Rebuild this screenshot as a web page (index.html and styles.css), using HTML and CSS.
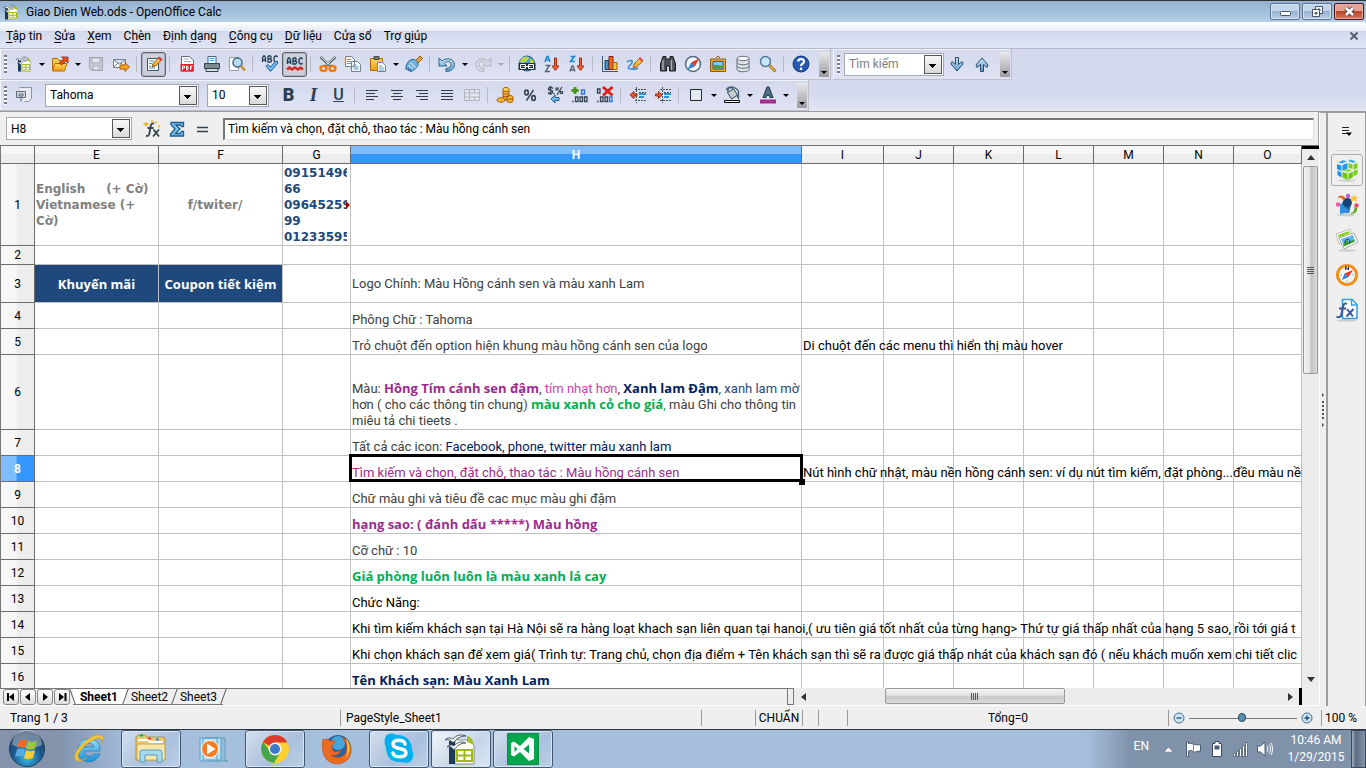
FILE: index.html
```html
<!DOCTYPE html>
<html lang="vi">
<head>
<meta charset="utf-8">
<title>Giao Dien Web.ods - OpenOffice Calc</title>
<link rel="stylesheet" href="styles.css">
</head>
<body>
<svg class="defs" aria-hidden="true">
  <defs>
    <linearGradient id="gold" x1="0" y1="0" x2="0" y2="1"><stop offset="0" stop-color="#ffd75a"/><stop offset="1" stop-color="#f09a1c"/></linearGradient>
    <linearGradient id="sky" x1="0" y1="0" x2="0" y2="1"><stop offset="0" stop-color="#cfe6f6"/><stop offset="1" stop-color="#5a9cc8"/></linearGradient>
    <radialGradient id="orb" cx=".5" cy=".75" r=".7"><stop offset="0" stop-color="#38c0ee"/><stop offset=".55" stop-color="#1b5c94"/><stop offset="1" stop-color="#24405f"/></radialGradient>
    <linearGradient id="ie" x1="0" y1="0" x2="0" y2="1"><stop offset="0" stop-color="#8fe0fb"/><stop offset="1" stop-color="#1b8fd8"/></linearGradient>
    <symbol id="calc" viewBox="0 0 32 32"><path d="M10 7h14l5 5v19H10z" fill="#fff" stroke="#888"/><path d="M4 8h6v23H4z" fill="#1c3a58"/><path d="M22 3c4 1 6 4 7 9l-7-3z" fill="#a4bd1c"/><path d="M12 17h15v11H12zM12 22.500h15M19.500 17v11" fill="#fff" stroke="#a0b81a" stroke-width="2"/><path d="M0 7c3-3 6-2 8-1 3-4 8-5 13-3-6 0-10 3-13 7-2-3-4-4-8-3zM2 14c3-3 5-2 7-1 3-4 8-5 12-3-6 0-9 3-12 7-2-3-4-4-7-3z" fill="#fff" stroke="#455664"/></symbol>
  </defs>
</svg>
<div class="app">
  <header class="titlebar">
    <svg class="i16" viewBox="0 0 32 32"><use href="#calc"/></svg>
    <h1>Giao Dien Web.ods - OpenOffice Calc</h1>
    <div class="winbtns">
      <button class="win" aria-label="Minimize"><svg viewBox="0 0 27 15"><rect x="8.500" y="7.500" width="10" height="4" rx="1" fill="#fff" stroke="#4a5468"/></svg></button>
      <button class="win" aria-label="Restore"><svg viewBox="0 0 27 15"><path d="M11.500 2.500h7v7h-7z" fill="#fff" stroke="#4a5468"/><path d="M14 5h2v2h-2z" fill="#8fb0d0" stroke="#4a5468"/><path d="M8.500 5.500h7v7h-7z" fill="#fff" stroke="#4a5468"/><path d="M11 8.500h2v1.500h-2z" fill="#8fb0d0" stroke="#4a5468"/></svg></button>
      <button class="win close" aria-label="Close"><svg viewBox="0 0 27 15"><path d="M10 4l7 7m0-7l-7 7" stroke="#4b4048" stroke-width="4.500"/><path d="M10 4l7 7m0-7l-7 7" stroke="#fff" stroke-width="2.600"/></svg></button>
    </div>
  </header>
  <nav class="menubar">
    <button><u>T</u>ập tin</button><button><u>S</u>ửa</button><button><u>X</u>em</button><button>C<u>h</u>èn</button><button>Định <u>d</u>ạng</button><button><u>C</u>ông cụ</button><button><u>D</u>ữ liệu</button><button>Cử<u>a</u> sổ</button><button>Trợ g<u>i</u>úp</button>
    <button class="docclose" aria-label="Đóng"><svg viewBox="0 0 10 10"><path d="M1.500 1.500l7 7m0-7l-7 7" stroke="#56606e" stroke-width="2"/></svg></button>
  </nav>
  <div class="toolbars">
    <div class="barrow">
      <div class="bar">
        <span class="grip"></span>
        <button class="t" aria-label="New"><svg class="small" viewBox="0 0 32 32"><use href="#calc"/></svg></button><button class="a" aria-label="More"></button>
        <button class="t" aria-label="Open"><svg viewBox="0 0 18 18"><path d="M1.500 15.500v-12h5l1.500 2h5v3" fill="#f7c948" stroke="#b4690e"/><path d="M1.500 16L4 8.500h12L13.500 16z" fill="url(#gold)" stroke="#b4690e"/><path d="M8 8l5-4-2.500-2H17v6l-2-2-4.500 4z" fill="#e2501c" stroke="#9b2408" stroke-width=".8"/></svg></button><button class="a" aria-label="More"></button>
        <button class="t" aria-label="Save"><svg viewBox="0 0 18 18"><path d="M2.500 2.500h13v13h-11l-2-2z" fill="#c6cbd8" stroke="#9da3b1"/><path d="M5 3h8v5H5zM6 11h6v4H6z" fill="#e5e8f0" stroke="#a8adba"/></svg></button>
        <button class="t" aria-label="Mail"><svg viewBox="0 0 18 18"><path d="M1.500 4.500h12v8h-12zM1.500 5l6 4 6-4M2 12l4-4m7 4L9 8" fill="#fff" stroke="#6f8293"/><path d="M8 10h5V7.500l4.500 4.500-4.500 4.500V14H8z" fill="#f6a31b" stroke="#a35c08"/></svg></button>
        <i class="s"></i>
        <button class="t on" aria-label="Edit"><svg viewBox="0 0 18 18"><path d="M2.500 3.500h11v12h-11z" fill="#fff" stroke="#38566e"/><path d="M4 6h5M4 8.500h3M4 11h2M4 13h6" stroke="#4d96c8"/><path d="M7 12l1-3.500L14.500 2 17 4.500 10.500 11z" fill="url(#gold)" stroke="#8a5a16"/><path d="M14 1.500l3 3-1.500 1.500-3-3z" fill="#d43838"/></svg></button>
        <i class="s"></i>
        <button class="t" aria-label="PDF"><svg viewBox="0 0 18 18"><path d="M3.500 1.500h8l4 4V16h-12z" fill="#fff" stroke="#62717e"/><path d="M6 4h5M6 6.500h7" stroke="#9db3c4"/><path d="M2.500 9h13v7.500h-13z" fill="#e21f26"/><path d="M4.500 15v-4h2v2h-2m4 2v-4h1l.5 1v2l-.5 1h-1m4 0v-4h2M12.500 13h1.500" fill="none" stroke="#fff"/></svg></button>
        <button class="t" aria-label="Print"><svg viewBox="0 0 18 18"><path d="M5 8V1.500h8V8" fill="#fff" stroke="#57636e"/><path d="M6.500 3.500h5M6.500 5.500h5" stroke="#54a0cf"/><path d="M1.500 8.500h15v5h-15z" fill="#7d8992" stroke="#33424e"/><path d="M3 13.500h12v3H3z" fill="#d8dde0" stroke="#33424e"/></svg></button>
        <button class="t" aria-label="Preview"><svg viewBox="0 0 18 18"><path d="M1.500 2.500h9v13h-9z" fill="#fff" stroke="#94a0ac"/><circle cx="9.500" cy="7.500" r="4.500" fill="#b7dcf2" stroke="#4b6b86" stroke-width="1.500"/><path d="M13 11l4 4.500" stroke="#c98e2e" stroke-width="2.500"/></svg></button>
        <i class="s"></i>
        <button class="t" aria-label="Spelling"><svg viewBox="0 0 18 18"><path d="M1.500 7V3l1-2h1l1 2v4M1.500 5h3M7 1v6h2.500l1-1V5L9.500 4H7h2.500l.5-1V2l-.5-1H7m9.500 1L15.500 1h-1L13 2.500v3L14.500 7h1l1-1" fill="none" stroke="#233f58" stroke-width="1.300"/><path d="M5 11l2-1.500L9.500 12 15 6l2 2-7.500 8.500z" fill="#6cb9ee" stroke="#215f9c"/></svg></button>
        <button class="t on" aria-label="AutoSpell"><svg viewBox="0 0 18 18"><path d="M1.500 9V5l1-2h1l1 2v4M1.500 7h3M7 3v6h2.500l1-1V7L9.500 6H7h2.500l.5-1V4l-.5-1H7m9.500 1L15.500 3h-1L13 4.500v3L14.500 9h1l1-1" fill="none" stroke="#233f58" stroke-width="1.400"/><path d="M1 14.500l2.500-2 2.500 2 3-2 3 2 2.500-2 2.500 2" fill="none" stroke="#d62a20" stroke-width="2.500"/></svg></button>
        <i class="s"></i>
        <button class="t" aria-label="Cut"><svg viewBox="0 0 18 18"><path d="M1.500 2l11 10M16.500 2l-11 10" stroke="#56616c" stroke-width="2.600"/><path d="M2 2l9 8M16 2l-9 8" stroke="#f4f4f4"/><ellipse cx="4.500" cy="13.500" rx="3" ry="2.500" fill="none" stroke="#ec7c14" stroke-width="2.400"/><ellipse cx="13.500" cy="13.500" rx="3" ry="2.500" fill="none" stroke="#ec7c14" stroke-width="2.400"/></svg></button>
        <button class="t" aria-label="Copy"><svg viewBox="0 0 18 18"><path d="M1.500 1.500h6l3 3v7h-9zM7.500 6.500h6l3 3v7h-9z" fill="#f5f8fa" stroke="#72828f"/><path d="M3 4.500h4M3 6.500h4M3 8.500h4M9.500 10h3M9.500 12h5M9.500 14h5" stroke="#5b9bc7"/></svg></button>
        <button class="t" aria-label="Paste"><svg viewBox="0 0 18 18"><path d="M1.500 3.500h12v12h-12z" fill="url(#gold)" stroke="#a9690f"/><path d="M5 1.500h5v3H5z" fill="#707a80" stroke="#42484c"/><path d="M8.500 7.500h5l3 3v6h-8z" fill="#fff" stroke="#72828f"/><path d="M10 11h3M10 13h5M10 15h5" stroke="#5b9bc7"/></svg></button><button class="a" aria-label="More"></button>
        <button class="t" aria-label="Format Paintbrush"><svg viewBox="0 0 18 18"><path d="M10 6l5-5 2.500 2.500-5 5z" fill="#e9a23b" stroke="#915e15"/><path d="M7 4.500c3-1 7 3 6 6-2 3-5 6-8 6l1-2-3 1 1-2-3 1V11c1-3 3-6 6-6.500z" fill="#74b4e0" stroke="#28639a"/><path d="M5 7.500l5.500 5M3.500 10l4 4" stroke="#e4f3fd"/></svg></button>
        <i class="s"></i>
        <button class="t" aria-label="Undo"><svg viewBox="0 0 18 18"><path d="M1 3v8h8L6.500 8.500C9 5.500 13 6 13 9.500c0 2.500-2 4-5 4V16.500c5 0 8.500-3 8.500-7C16.500 4 9 2 4 6z" fill="url(#sky)" stroke="#2c6288"/></svg></button><button class="a" aria-label="More"></button>
        <button class="t" aria-label="Redo"><svg viewBox="0 0 18 18"><path d="M17 3v8H9l2.500-2.500C9 5.500 5 6 5 9.500c0 2.500 2 4 5 4V16.500c-5 0-8.500-3-8.500-7C1.500 4 9 2 14 6z" fill="#d4d8e2" stroke="#aeb3c0"/></svg></button><button class="a off" aria-label="More"></button>
        <i class="s"></i>
        <button class="t" aria-label="Hyperlink"><svg viewBox="0 0 18 18"><circle cx="9" cy="8.500" r="7.500" fill="#4d9fd8" stroke="#245a7c"/><path d="M3 4c3-3 6-3 8-1L9 6 5 8 2 7zM12 4l3 1 1 3-4 1z" fill="#b8d84a"/><path d="M2 9.500h6v4H2zM10 9.500h6v4h-6zM5 11.500h8" fill="none" stroke="#24343c" stroke-width="3"/><path d="M2.500 9.500h5v4h-5zM10.500 9.500h5v4h-5zM5.500 11.500h7" fill="none" stroke="#fff"/></svg></button>
        <button class="t" aria-label="Sort A-Z"><svg viewBox="0 0 18 18"><path d="M2 7l2-5.500h1L7 7M3 5h3" fill="none" stroke="#1d8acb" stroke-width="1.600"/><path d="M2.500 10.500h4l-4 6H7" fill="none" stroke="#566573" stroke-width="1.400"/><path d="M11.500 3h2v8H16l-3.500 4.500L9 11h2.500z" fill="#f16a35" stroke="#a42a0d"/></svg></button>
        <button class="t" aria-label="Sort Z-A"><svg viewBox="0 0 18 18"><path d="M2 16.500L4 11h1l2 5.500M3 15h3" fill="none" stroke="#566573" stroke-width="1.400"/><path d="M2.500 1.500h4l-4 5H7" fill="none" stroke="#1d8acb" stroke-width="1.600"/><path d="M11.500 3h2v8H16l-3.500 4.500L9 11h2.500z" fill="#f16a35" stroke="#a42a0d"/></svg></button>
        <i class="s"></i>
        <button class="t" aria-label="Chart"><svg viewBox="0 0 18 18"><path d="M1.500 1v15.500H17" fill="none" stroke="#41566a"/><path d="M4 5.500h4v9H4z" fill="#3a95d2" stroke="#1a3c5c"/><path d="M8 1.500h4v13H8z" fill="#f5681c" stroke="#80240c"/><path d="M12 7.500h4v7h-4z" fill="#f9c33c" stroke="#9b660b"/></svg></button>
        <button class="t" aria-label="Draw"><svg viewBox="0 0 18 18"><path d="M1 7c4-3 7-1 4 2s-4 5 0 5 4 1 7-1" fill="none" stroke="#3389d4" stroke-width="1.600"/><path d="M7 13l1-4 6-6 3 3-6.500 6z" fill="url(#gold)" stroke="#99651a"/><path d="M14 2l3 3-1.500 1.500-3-3z" fill="#dc4640"/></svg></button>
        <i class="s"></i>
        <button class="t" aria-label="Find"><svg viewBox="0 0 18 18"><path d="M4 1.500h3V4h4V1.500h3L16.500 9v7h-6v-5h-3v5h-6V9z" fill="#4a5257" stroke="#161a1c"/><path d="M4 5v10M12.500 5v10" stroke="#a9b1b5" stroke-width="1.400"/></svg></button>
        <button class="t" aria-label="Navigator"><svg viewBox="0 0 18 18"><circle cx="9" cy="9" r="7.500" fill="#f4f8fb" stroke="#566b80" stroke-width="1.500"/><path d="M3.500 14.500l3.500-7 4 4z" fill="#2f87d4"/><path d="M15 3.500l-4 8-4-4z" fill="#e23a22"/></svg></button>
        <button class="t" aria-label="Gallery"><svg viewBox="0 0 18 18"><path d="M7 3l2-2 2 2" fill="none" stroke="#815314"/><path d="M1.500 4h15v12.500h-15z" fill="#eda52e" stroke="#8f5a0e"/><path d="M4 6.500h10V14H4z" fill="#84c8ee" stroke="#38526a"/><path d="M4.500 13.500v-3c4-2 5 1 9 0v3z" fill="#4b9e35"/></svg></button>
        <button class="t" aria-label="Data Sources"><svg viewBox="0 0 18 18"><path d="M3 3.500v11c0 3 12 3 12 0v-11" fill="#dfe3e6" stroke="#63717c"/><ellipse cx="9" cy="3.500" rx="6" ry="2.200" fill="#f5f7f8" stroke="#63717c"/><path d="M3 7.500c0 3 12 3 12 0M3 11c0 3 12 3 12 0" fill="none" stroke="#63717c"/></svg></button>
        <button class="t" aria-label="Zoom"><svg viewBox="0 0 18 18"><circle cx="6.500" cy="6.500" r="5" fill="#c5e6f7" stroke="#55789a" stroke-width="1.500"/><path d="M10.500 10.500l6 6" stroke="#8a6316" stroke-width="3"/><path d="M11 11l5 5" stroke="#f4c04a" stroke-width="1.400"/></svg></button>
        <i class="s"></i>
        <button class="t" aria-label="Help"><svg viewBox="0 0 18 18"><circle cx="9" cy="9" r="8" fill="#2458b4" stroke="#193c7a"/><path d="M6 6.500C6.500 3 12 3.500 12 6.500c0 2-3 2.300-3 4.500m0 1.500V15" fill="none" stroke="#fff" stroke-width="2.200"/></svg></button>
        <button class="more" aria-label="Toolbar options"></button>
      </div>
      <div class="bar">
        <span class="grip"></span>
        <span class="combo find"><select aria-label="Tìm kiếm"><option>Tìm kiếm</option></select></span>
        <button class="t" aria-label="Find next"><svg viewBox="0 0 18 18"><path d="M7.500 2.500h3v7l3.500-3 1 2.500-6 7-6-7 1-2.500 3.500 3z" fill="url(#sky)" stroke="#254b68"/></svg></button>
        <button class="t" aria-label="Find previous"><svg viewBox="0 0 18 18"><path d="M7.500 16.500h3v-7l3.500 3 1-2.500-6-7-6 7 1 2.500 3.500-3z" fill="url(#sky)" stroke="#254b68"/></svg></button>
        <button class="more" aria-label="Toolbar options"></button>
      </div>
    </div>
    <div class="barrow">
      <div class="bar">
        <span class="grip"></span>
        <button class="t" aria-label="Styles"><svg viewBox="0 0 18 18"><path d="M4.500 1.500h12v11l-3 3h-4" fill="#e9edf2" stroke="#8995a0"/><path d="M1.500 5.500h9v6h-9zM6 11.500v4M4 8h4v2H4z" fill="#d5dbe1" stroke="#5c6a76"/></svg></button>
        <span class="combo font"><select aria-label="Phông chữ"><option>Tahoma</option></select></span>
        <span class="combo size"><select aria-label="Cỡ chữ"><option>10</option></select></span>
        <button class="t fmt b">B</button><button class="t fmt it">I</button><button class="t fmt un">U</button>
        <i class="s"></i>
        <button class="t" aria-label="Left"><svg viewBox="0 0 18 18"><path d="M3 4.500h12M3 7.500h9M3 10.500h12M3 13.500h8" stroke="#303b44"/></svg></button>
        <button class="t" aria-label="Center"><svg viewBox="0 0 18 18"><path d="M3 4.500h12M5 7.500h8M3 10.500h12M5 13.500h8" stroke="#303b44"/></svg></button>
        <button class="t" aria-label="Right"><svg viewBox="0 0 18 18"><path d="M3 4.500h12M6 7.500h9M3 10.500h12M7 13.500h8" stroke="#303b44"/></svg></button>
        <button class="t" aria-label="Justify"><svg viewBox="0 0 18 18"><path d="M3 4.500h12M3 7.500h12M3 10.500h12M3 13.500h12" stroke="#303b44"/></svg></button>
        <button class="t" aria-label="Merge"><svg viewBox="0 0 18 18"><path d="M1.500 3.500h15v11h-15zM1.500 7h15M1.500 11h15M6.500 3.500v11M11.500 3.500V7m0 4v3.500" fill="#e3e6ef" stroke="#b2b6c2"/></svg></button>
        <i class="s"></i>
        <button class="t" aria-label="Currency"><svg viewBox="0 0 18 18"><path d="M7 3c0-2 6-2 6 0v11H7z" fill="url(#gold)" stroke="#a3600c"/><path d="M7 5.500h6M7 8h6M7 10.500h6M11 11c0-2 6-2 6 0v4c0 2-6 2-6 0zM11 13h6M1 14c0-3 8-3 8 0s-8 3-8 0z" fill="#f6b335" stroke="#a3600c"/></svg></button>
        <button class="t" aria-label="Percent"><svg viewBox="0 0 18 18"><ellipse cx="5.500" cy="6.500" rx="1.800" ry="2.400" fill="none" stroke="#34434f" stroke-width="1.600"/><ellipse cx="12.500" cy="12" rx="1.800" ry="2.400" fill="none" stroke="#34434f" stroke-width="1.600"/><path d="M12.500 4l-7 10.500" stroke="#34434f" stroke-width="1.400"/></svg></button>
        <button class="t" aria-label="Standard"><svg viewBox="0 0 18 18"><path d="M7 2.500L5.500 1.500H3.500l-1 1v1l4 1.500v1.500l-1 1H3l-1-1M4.500 0v9M8 7v1.500" fill="none" stroke="#34434f" stroke-width="1.300"/><path d="M10 2h2v2h-2zM14.500 5.500h2v2h-2zM16 1l-5 8" fill="none" stroke="#34434f" stroke-width="1.200"/><path d="M5 13l4-4v2.500h4v3H9V17z" fill="#6bbcf0" stroke="#255d8c"/></svg></button>
        <button class="t" aria-label="Add decimal"><svg viewBox="0 0 18 18"><path d="M4 1v7M.5 4.500h7" stroke="#4a9413" stroke-width="2.800"/><path d="M10.500 4h3v4h-3z" fill="none" stroke="#2f78d2" stroke-width="1.400"/><path d="M1 15.500h1.500M4.500 11h2.500v4.500H4.500zM9 11h2.500v4.500H9zM13.500 11H16v4.500h-2.500z" fill="none" stroke="#34434f" stroke-width="1.300"/></svg></button>
        <button class="t" aria-label="Delete decimal"><svg viewBox="0 0 18 18"><path d="M1.500 3h2.500v4H1.500zM1 15.500h1.500M4.500 11h2.500v4.500H4.500zM9 11h2.500v4.500H9z" fill="none" stroke="#34434f" stroke-width="1.300"/><path d="M13.500 11H16v4.500h-2.500z" fill="none" stroke="#2f78d2" stroke-width="1.300"/><path d="M7 1l9.500 8.500m0-8.500L7 9.500" stroke="#dc2018" stroke-width="2.800"/></svg></button>
        <i class="s"></i>
        <button class="t" aria-label="Decrease indent"><svg viewBox="0 0 18 18"><path d="M6 3.500h11M10 6.500h7M10 11.500h6M6 14.500h11M7.500 1v16" stroke="#3f5260" stroke-dasharray="2 1"/><path d="M10 8h7M10 11h5" stroke="#2c91d0" stroke-width="2"/><path d="M1 9l4-3.500V8h3v2H5v2.500z" fill="#ef5a2b" stroke="#a22a0e"/></svg></button>
        <button class="t" aria-label="Increase indent"><svg viewBox="0 0 18 18"><path d="M6 3.500h11M10 6.500h7M10 11.500h6M6 14.500h11M8.500 1v16" stroke="#3f5260" stroke-dasharray="2 1"/><path d="M10 8h7M10 11h5" stroke="#2c91d0" stroke-width="2"/><path d="M8 9L4.500 5.500V8h-3v2h3v2.500z" fill="#ef5a2b" stroke="#a22a0e"/></svg></button>
        <i class="s"></i>
        <button class="t" aria-label="Borders"><svg viewBox="0 0 18 18"><path d="M3.500 3.500h11v11h-11z" fill="#e6eaf5" stroke="#1e2a34"/></svg></button><button class="a" aria-label="More"></button>
        <button class="t" aria-label="Background"><svg viewBox="0 0 18 18"><path d="M1.500 14.500h15v2h-15z" fill="#fff" stroke="#000"/><path d="M4.500 6.500l6-3.500 4 6-6 4z" fill="#c6ccd0" stroke="#2d4354"/><path d="M5 6C4 1 10 0 10 4M3 3.500C7-1 13 1 15.500 5v7l-2-3" fill="none" stroke="#415d72" stroke-width="1.300"/></svg></button><button class="a" aria-label="More"></button>
        <button class="t" aria-label="Font color"><svg viewBox="0 0 18 18"><path d="M1 13.500h16v4H1z" fill="#a0308c"/><path d="M4 11.500L8 1h2l4 10.500h-3l-.5-2h-3l-.5 2z" fill="#516c82" stroke="#22394c"/></svg></button><button class="a" aria-label="More"></button>
        <button class="more" aria-label="Toolbar options"></button>
      </div>
    </div>
  </div>
  <main class="work">
    <section class="doc">
      <div class="formula">
        <span class="combo name"><input value="H8" aria-label="Hộp tên"></span>
        <div class="fbtns">
          <button class="t" aria-label="Function wizard"><svg viewBox="0 0 18 18"><path d="M11 4c-2-1.500-3 0-3.500 3l-1 6c-.5 3-2 3.500-3.500 2.500M4.500 8h6" fill="none" stroke="#34444e" stroke-width="1.800"/><path d="M10.500 9.500l5.500 7M16 9.500l-6 7" stroke="#34444e" stroke-width="1.800"/><path d="M3 2l.7 1.600 1.700.4-1.700.6L3 6.500l-.7-1.900L.6 4l1.700-.4zM9 0v2.500M8 1.200h2.500M13 1v2.500M12 2.200h2.500M16 5v2.500M15 6.200h2.500" fill="#ffd030" stroke="#edb51e"/></svg></button>
          <button class="t" aria-label="Sum"><svg viewBox="0 0 18 18"><path d="M3 2.500h12.500v4h-2L12.500 5H8l4 4-4.500 4.500h5l1-2h2v4.500H2.500v-2L7 9 3 4.500z" fill="#7cc3ef" stroke="#1b5b8e" stroke-width="1.300"/></svg></button>
          <button class="t" aria-label="Function"><svg viewBox="0 0 18 18"><path d="M4 7.500h11M4 11.500h11" stroke="#34404a" stroke-width="1.600"/></svg></button>
        </div>
        <input class="line" aria-label="Dòng nhập" value="Tìm kiếm và chọn, đặt chỗ, thao tác : Màu hồng cánh sen">
      </div>
      <div class="gridrow">
        <div class="sheet">
          <table>
            <colgroup><col class="c-row"><col class="c-e"><col class="c-e"><col class="c-g"><col class="c-h"><col class="c-i"><col class="c-j"><col class="c-j"><col class="c-j"><col class="c-j"><col class="c-j"><col></colgroup>
            <thead><tr><th></th><th>E</th><th>F</th><th>G</th><th class="sel">H</th><th>I</th><th>J</th><th>K</th><th>L</th><th>M</th><th>N</th><th>O</th></tr></thead>
            <tbody>
              <tr class="r1"><th>1</th><td class="grey pre">English     (+ Cờ)
Vietnamese (+
Cờ)</td><td class="grey mid">f/twiter/</td><td class="blue"><div class="phones">09151496<br>66<br>09645259<br>99<br>01233595</div></td><td></td><td></td><td></td><td></td><td></td><td></td><td></td><td></td></tr>
              <tr class="r2"><th>2</th><td></td><td></td><td></td><td></td><td></td><td></td><td></td><td></td><td></td><td></td><td></td></tr>
              <tr class="r3"><th>3</th><td class="navy">Khuyến mãi</td><td class="navy">Coupon tiết kiệm</td><td></td><td class="ghi">Logo Chính: Màu Hồng cánh sen và màu xanh Lam</td><td></td><td></td><td></td><td></td><td></td><td></td><td></td></tr>
              <tr><th>4</th><td></td><td></td><td></td><td class="ghi">Phông Chữ : Tahoma</td><td></td><td></td><td></td><td></td><td></td><td></td><td></td></tr>
              <tr><th>5</th><td></td><td></td><td></td><td class="ghi">Trỏ chuột đến option hiện khung màu hồng cánh sen của logo</td><td>Di chuột đến các menu thì hiển thị màu hover</td><td></td><td></td><td></td><td></td><td></td><td></td></tr>
              <tr class="r6"><th>6</th><td></td><td></td><td></td><td class="ghi">Màu: <b class="pink">Hồng Tím cánh sen đậm</b>, <span class="lpink">tím nhạt hơn</span>, <b class="dblue">Xanh lam Đậm</b>, <span class="mblue">xanh lam mờ</span><br>hơn ( cho các thông tin chung) <b class="green">màu xanh cỏ cho giá</b><span class="green">,</span> màu Ghi cho thông tin<br>miêu tả chi tieets .</td><td></td><td></td><td></td><td></td><td></td><td></td><td></td></tr>
              <tr><th>7</th><td></td><td></td><td></td><td class="ghi">Tất cả các icon: <span class="dblue">Facebook, phone, twitter màu xanh lam</span></td><td></td><td></td><td></td><td></td><td></td><td></td><td></td></tr>
              <tr><th class="sel">8</th><td></td><td></td><td></td><td class="cursor pink">Tìm kiếm và chọn, đặt chỗ, thao tác : Màu hồng cánh sen</td><td>Nút hình chữ nhật, màu nền hồng cánh sen: ví dụ nút tìm kiếm, đặt phòng...đều màu nền</td><td></td><td></td><td></td><td></td><td></td><td></td></tr>
              <tr><th>9</th><td></td><td></td><td></td><td class="ghi">Chữ màu ghi và tiêu đề cac mục màu ghi đậm</td><td></td><td></td><td></td><td></td><td></td><td></td><td></td></tr>
              <tr><th>10</th><td></td><td></td><td></td><td><b class="pink">hạng sao: ( đánh dấu *****) Màu hồng</b></td><td></td><td></td><td></td><td></td><td></td><td></td><td></td></tr>
              <tr><th>11</th><td></td><td></td><td></td><td class="ghi">Cỡ chữ : 10</td><td></td><td></td><td></td><td></td><td></td><td></td><td></td></tr>
              <tr><th>12</th><td></td><td></td><td></td><td><b class="green">Giá phòng luôn luôn là màu xanh lá cay</b></td><td></td><td></td><td></td><td></td><td></td><td></td><td></td></tr>
              <tr><th>13</th><td></td><td></td><td></td><td>Chức Năng:</td><td></td><td></td><td></td><td></td><td></td><td></td><td></td></tr>
              <tr><th>14</th><td></td><td></td><td></td><td>Khi tìm kiếm khách sạn tại Hà Nội sẽ ra hàng loạt khach sạn liên quan tại hanoi,( ưu tiên giá tốt nhất của từng hạng&gt; Thứ tự giá thấp nhất của hạng 5 sao, rồi tới giá t</td><td></td><td></td><td></td><td></td><td></td><td></td><td></td></tr>
              <tr><th>15</th><td></td><td></td><td></td><td>Khi chọn khách sạn để xem giá( Trình tự: Trang chủ, chọn địa điểm + Tên khách sạn thì sẽ ra được giá thấp nhát của khách sạn đó ( nếu khách muốn xem chi tiết clic</td><td></td><td></td><td></td><td></td><td></td><td></td><td></td></tr>
              <tr><th>16</th><td></td><td></td><td></td><td><b class="dblue">Tên Khách sạn: Màu Xanh Lam</b></td><td></td><td></td><td></td><td></td><td></td><td></td><td></td></tr>
            </tbody>
          </table>
        </div>
        <div class="vscroll">
          <button class="arr" aria-label="Lên"><svg viewBox="0 0 8 5"><path d="M0 5l4-5 4 5z" fill="#333"/></svg></button>
          <div class="vthumb"><i></i><i></i><i></i><i></i></div>
          <button class="arr end" aria-label="Xuống"><svg viewBox="0 0 8 5"><path d="M0 0l4 5 4-5z" fill="#333"/></svg></button>
        </div>
      </div>
      <div class="tabrow">
        <div class="tabpane">
          <div class="tabnav">
            <button aria-label="First"><svg viewBox="0 0 12 10"><path d="M3 1v8" stroke="#000" stroke-width="2"/><path d="M9 1v8L4 5z"/></svg></button>
            <button aria-label="Previous"><svg viewBox="0 0 12 10"><path d="M8 1v8L3 5z"/></svg></button>
            <button aria-label="Next"><svg viewBox="0 0 12 10"><path d="M4 1v8l5-4z"/></svg></button>
            <button aria-label="Last"><svg viewBox="0 0 12 10"><path d="M3 1v8l5-4z"/><path d="M9.500 1v8" stroke="#000" stroke-width="2"/></svg></button>
          </div>
          <button class="tab active">Sheet1</button><button class="tab">Sheet2</button><button class="tab">Sheet3</button>
          <span class="split"></span>
        </div>
        <div class="hscroll">
          <button class="harr" aria-label="Trái"><svg viewBox="0 0 5 8"><path d="M5 0L0 4l5 4z" fill="#333"/></svg></button>
          <div class="htrack"><div class="hthumb"><i></i><i></i><i></i><i></i></div></div>
          <button class="harr" aria-label="Phải"><svg viewBox="0 0 5 8"><path d="M0 0l5 4-5 4z" fill="#333"/></svg></button>
          <span class="hend"></span>
        </div>
      </div>
    </section>
    <div class="splitter"><b></b><i></i><i></i><i></i><i></i><i></i><b></b></div>
    <aside class="sidebar">
      <button class="sm" aria-label="Settings"><svg viewBox="0 0 10 10"><path d="M0 1.500h7M0 4.500h7M0 7.500h5" stroke="#222"/><path d="M4 6.500h6L7 10z"/></svg></button>
      <hr>
      <button class="sb on" aria-label="Properties"><svg viewBox="0 0 24 24"><ellipse cx="12" cy="22.500" rx="9" ry="1.200" fill="#ccc"/><path d="M3 4.500L8 2l4 1.500-5 2zM13 3l2.500-1.500L21 3.500l-3 1.500z" fill="#3aaaf0"/><path d="M2 6l4.500 1.500v5.500L2 11zM2.500 12.500l4 2v5l-4-2.500zM7.500 7l5-2v5.500l-5 2.500z" fill="#1c97e6"/><path d="M13.500 5l4 1.500v4.500l-4-1.500zM18.500 6.500l4-1.500v5l-4 1.800zM18.500 13l4-1.800v5l-4 2.300z" fill="#79cf1b"/><path d="M8 12.500l4.500-2 5 1.700-4.500 2z" fill="#98e33e"/><path d="M7.500 14l5 1.700v6l-5-2.200zM13.500 15.700l4.300-2v5.500l-4.300 2.500z" fill="#6bc20f"/></svg></button>
      <button class="sb" aria-label="Styles"><svg viewBox="0 0 24 24"><ellipse cx="11" cy="22" rx="9" ry="1.500" fill="#ccc"/><path d="M7 10c3-5 9-3 9 2l-2 8-9-1z" fill="#1c6bb0"/><path d="M5 21V10l10 9z" fill="#2f91dd"/><circle cx="12.500" cy="9.500" r="4.500" fill="#154274"/><path d="M2.500 6c1-5 7-4 8 0l-3 1c-1-3-3-3-5-1z" fill="#dc681d"/><path d="M14 20c4 0 6-2 5-6l3 1c1 4-3 7-8 5z" fill="#64a829"/><path d="M19 1l1.200 3H23l-2 2 1 3-3-1.700L16 9l1-3-2-2h3z" fill="#fbc331"/><circle cx="13" cy="3" r="2.200" fill="#bb5ad8"/><circle cx="3" cy="11.500" r="2.200" fill="#ee5aa8"/><circle cx="21.500" cy="12.500" r="2.200" fill="#ee4760"/></svg></button>
      <button class="sb" aria-label="Gallery"><svg viewBox="0 0 24 24"><ellipse cx="12" cy="22.500" rx="9" ry="1.200" fill="#ccc"/><path d="M1 6l14-5 3 9L4 16z" fill="#fff" stroke="#bbb"/><path d="M3 7l11-4 1 2-11 5z" fill="#8bd321"/><path d="M4 10l15-5 4 9-14 7z" fill="#fff" stroke="#aaa"/><path d="M6 11l12-4 2 6-11 5z" fill="#62b7ea"/><path d="M8 16l4-4 2 3 3-3 4 1-12 5.500z" fill="#3f9b28"/><path d="M10 15c-1-4 4-5 5-2l-1 3" fill="none" stroke="#174a7c"/></svg></button>
      <button class="sb" aria-label="Navigator"><svg viewBox="0 0 24 24"><circle cx="12" cy="12" r="9.500" fill="#f6f7f8" stroke="#f09014" stroke-width="3"/><path d="M12 5v14M5 12h14" stroke="#aab" stroke-dasharray="2 10"/><path d="M10.500 7V3.500l3 3.500V3.500" fill="none" stroke="#333"/><path d="M7 17l2.500-6.500 4 3.500z" fill="#2c80d8"/><path d="M18 7l-4.500 7-4-3.500z" fill="#e3392c"/></svg></button>
      <button class="sb" aria-label="Functions"><svg viewBox="0 0 24 24"><ellipse cx="12" cy="22.500" rx="10" ry="1.200" fill="#ccc"/><path d="M7.500 1.500H17l5 5v14H7.500z" fill="#fff" stroke="#2e9fe0" stroke-width="1.500"/><path d="M16.500 2v5H22" fill="none" stroke="#2e9fe0" stroke-width="1.300"/><path d="M12 6c-2-1.500-3.500 0-4 3L6.500 16c-.5 3-2.500 4-5 2.500M4 10.500h7" fill="none" stroke="#36579b" stroke-width="2"/><path d="M12 11l6 7.500M18.500 11l-7 7.500" stroke="#36579b" stroke-width="2"/></svg></button>
    </aside>
  </main>
  <footer class="status">
    <span class="st-page">Trang 1 / 3</span><span class="st-style">PageStyle_Sheet1</span><span class="st-ins"></span><span class="st-std">CHUẨN</span><span class="st-a"></span><span class="st-b"></span><span class="st-sum">Tổng=0</span>
    <span class="st-zoom"><button class="zb" aria-label="Thu nhỏ"><svg viewBox="0 0 12 12"><circle cx="6" cy="6" r="5" fill="#cfe4f4" stroke="#3f6d96"/><path d="M3.500 6h5" stroke="#1d4c78" stroke-width="1.300"/></svg></button><input type="range" min="0" max="100" value="49" aria-label="Thu phóng"><button class="zb" aria-label="Phóng to"><svg viewBox="0 0 12 12"><circle cx="6" cy="6" r="5" fill="#cfe4f4" stroke="#3f6d96"/><path d="M3.500 6h5M6 3.500v5" stroke="#1d4c78" stroke-width="1.300"/></svg></button></span>
    <span class="st-pct">100 %</span>
  </footer>
</div>
<div class="taskbar">
  <button class="start" aria-label="Start"><svg viewBox="0 0 38 38"><circle cx="19" cy="19" r="17.500" fill="url(#orb)" stroke="#22405f"/><path d="M4 15a15 15 0 0 1 30 0c-8 4-20 4-30 0z" fill="#fff" opacity=".35"/><path d="M11 11c3-2 5-2 8-.500l-2 7.500c-3-1.500-5-1.500-8 0z" fill="#ee6a2a"/><path d="M20 11c3 1.500 6 1.500 9-.500l-2 8c-3 2-6 1.500-9 0z" fill="#9dc63a"/><path d="M9 19.500c3-1.500 5-1.500 8 0l-2 7.500c-3-1.500-5-1.500-8 0z" fill="#5ca9e6"/><path d="M18 20c3 1.500 6 1.500 9 0l-2 8c-3 1.500-6 1.500-9 0z" fill="#fcc938"/></svg></button>
  <div class="apps">
    <button class="app-btn" aria-label="Internet Explorer"><svg viewBox="0 0 32 32"><path d="M27 18H11c0 6 8 7 10 3h6C22 33 5 31 5 17 5 2 28 2 27 18zM11 14h10c-1-5-9-5-10 0z" fill="url(#ie)" stroke="#1c7cba" stroke-width=".7"/><path d="M3 27C-4 21 20-3 29 3c2 1 1 4 0 6 0-3-1-4-3-4C17 6 3 19 5 25c1 3 5 2 9 0-4 3-9 4-11 2z" fill="#f7c92b" stroke="#d5961b" stroke-width=".5"/></svg></button>
    <button class="app-btn run" aria-label="Explorer"><svg viewBox="0 0 32 32"><path d="M1 4l2-2h7l2 2h17l1 3v20H1z" fill="#e7ca76" stroke="#b5923f"/><path d="M3 7h10l2 2h13" stroke="#fff" stroke-width="2"/><path d="M5 2.500h3" stroke="#16a33a" stroke-width="2"/><path d="M13 5.500h3" stroke="#d9382c" stroke-width="2"/><path d="M21 6.500h3" stroke="#3388dc" stroke-width="2"/><path d="M2 11h28v16H2z" fill="#f6e7ad" stroke="#c7a751"/><path d="M5 29V19q0-2 2-2h18q2 0 2 2v10h-5v-7H10v7z" fill="#a4daf1" stroke="#5a9dc0"/></svg></button>
    <button class="app-btn" aria-label="Media Player"><svg viewBox="0 0 32 32"><path d="M9 5h19v22l3 1H12z" fill="#90bfdc" stroke="#689bbb"/><path d="M6 5h18v22H6zM3 5h17v23H3z" fill="#b7e0f2" stroke="#619fc5"/><circle cx="13" cy="16" r="8.500" fill="#f47b20" stroke="#fff"/><path d="M10 10.500l8.500 5.500-8.500 5.500z" fill="#fff"/></svg></button>
    <button class="app-btn run" aria-label="Chrome"><svg viewBox="0 0 32 32"><circle cx="16" cy="16" r="14" fill="#fcd02f"/><path d="M16 16L3.900 9A14 14 0 0 1 28.500 9.500H16z" fill="#dd3a2e"/><path d="M16 16l-4.500 2.500L4 9A14 14 0 0 0 15 30l6-10.500z" fill="#44a648"/><circle cx="16" cy="16" r="6.500" fill="#f6f6f6"/><circle cx="16" cy="16" r="5" fill="#3c79c6"/></svg></button>
    <button class="app-btn" aria-label="Firefox"><svg viewBox="0 0 32 32"><circle cx="17" cy="15" r="13" fill="#2763a8"/><circle cx="17" cy="10" r="7" fill="#45a5da"/><path d="M2 6c1 1 2 1 3 0 2 0 3 1 4 2h5c0 2-1 3-3 4v3c0 4 5 5 9 2-1 5-7 6-10 5 4 4 13 3 15-3 2-6-1-11-4-15 6 3 10 9 9 15-1 8-8 12-15 12C6 30-1 22 2 6z" fill="#ea6a20" stroke="#c34310" stroke-width=".6"/><path d="M25 5c5 6 5 14 0 20 2-6 2-13 0-20z" fill="#f8c437"/></svg></button>
    <button class="app-btn run" aria-label="Skype"><svg viewBox="0 0 32 32"><path d="M3 3c3-3 7-3 10-1 8-1 16 4 16 15 3 6 0 13-6 13-2 0-4-1-5-1C9 30 3 24 3 15 1 10 1 6 3 3z" fill="#00aff0"/><path d="M22 11c-1-5-12-5-12 0 0 6 13 3 13 9 0 5-12 5-13 0" fill="none" stroke="#fff" stroke-width="3.600" stroke-linecap="round"/></svg></button>
    <button class="app-btn run cur" aria-label="OpenOffice Calc"><svg viewBox="0 0 32 32"><use href="#calc"/></svg></button>
    <button class="app-btn run" aria-label="Visual Studio"><svg viewBox="0 0 32 32"><path d="M.5.500h31v31H.500z" fill="#00a74b" stroke="#118a46"/><path d="M4 10l3-1.500 6 4.500L22 4l5 2v20l-5 2-9-9-6 4.500L4 22zM7.500 13v6l3-3zM22 11.500L16.500 16l5.500 4.500z" fill="#fff" fill-rule="evenodd"/></svg></button>
  </div>
  <div class="tray">
    <span class="lang">EN</span>
    <button class="up" aria-label="Show hidden icons"><svg viewBox="0 0 9 5"><path d="M0 5l4.500-5L9 5z" fill="#fff" stroke="#56667c" stroke-width=".5"/></svg></button>
    <button class="tr" aria-label="Action Center"><svg viewBox="0 0 16 16"><path d="M1.500 1v14.500h2V10c3-2 4 1 6 1s3-1 6-1V3.500c-3 1-4 0-6 0s-3-2-6-1V1z" fill="#fff" stroke="#4a5a70"/><path d="M8.500 3v8" stroke="#7d8da3"/></svg></button>
    <button class="tr" aria-label="Battery"><svg viewBox="0 0 16 16"><path d="M6 .500h4v2h2.500v13h-9v-13H6z" fill="#fff" stroke="#3a4a60"/><path d="M5.500 4.500h5v4h-5z" fill="#4a5c74"/></svg></button>
    <button class="tr" aria-label="Network"><svg viewBox="0 0 16 16"><path d="M.500 12.500h2v3h-2zM3.500 10.500h2v5h-2zM6.500 7.500h2v8h-2zM9.500 4.500h2v11h-2zM12.500 1.500h2v14h-2z" fill="#fff" stroke="#4a5a70" stroke-width=".8"/></svg></button>
    <button class="tr" aria-label="Volume"><svg viewBox="0 0 16 16"><path d="M.500 5h3L8 1v14l-4.500-4h-3z" fill="#fff" stroke="#4a5a70"/><path d="M10 5c1 2 1 4 0 6M12 3.500c2 3 2 6 0 9M14 2c2 4 2 8 0 12" fill="none" stroke="#fff"/></svg></button>
    <div class="clock"><time>10:46 AM</time><time>1/29/2015</time></div>
    <button class="desk" aria-label="Show desktop"></button>
  </div>
</div>
</body>
</html>
```

FILE: styles.css
```css
* { box-sizing: border-box; }
html, body { height: 100%; }
body { margin: 0; display: flex; flex-direction: column; overflow: hidden; font: 12px/16px Roboto, "Noto Sans", sans-serif; color: #000; background: #efefef; }
button { font: inherit; color: inherit; background: none; border: 0; padding: 0; margin: 0; display: flex; align-items: center; justify-content: center; flex: none; }
input, select { font: inherit; color: inherit; margin: 0; border-radius: 0; outline: 0; }
svg { display: block; fill: #000; flex: none; }
.defs { position: absolute; width: 0; height: 0; }
.app { flex: 1; min-height: 0; display: flex; flex-direction: column; }
.i16 { width: 16px; height: 16px; }

.titlebar { height: 22px; display: flex; align-items: center; gap: 7px; padding: 0 2px 0 3px; border-top: 1px solid #333; background: linear-gradient(#93b0d0, #b6cfe9); }
.titlebar h1 { flex: 1; margin: 0; font-size: 12px; font-weight: 400; line-height: 20px; }
.winbtns { display: flex; gap: 2px; }
.win { width: 30px; height: 17px; border: 1px solid #5c7291; border-radius: 2px; background: linear-gradient(#c2d5ea 48%, #9ab5d3 50%, #b5cce4); box-shadow: inset 0 0 0 1px #d3e2f2; }
.win svg { width: 27px; height: 15px; }
.win.close { border-color: #47121c; background: linear-gradient(#e2a396 48%, #bb432a 50%, #d47a60); box-shadow: inset 0 0 0 1px #e5afa4; }

.menubar { height: 27px; display: flex; align-items: center; gap: 12px; padding: 1px 7px 0 6px; background: linear-gradient(#fff, #e6ecf5 9px, #d3d9ec 9px, #e0e5f5); border-bottom: 1px solid #b3b8cc; }
.menubar button { display: block; }
.menubar u { text-underline-offset: 2px; }
.menubar .docclose { margin-left: auto; }
.docclose svg { width: 10px; height: 10px; }

.toolbars { background: linear-gradient(#d4d9ed 70%, #e1e6f6); border-bottom: 1px solid #9b9ca0; }
.barrow { display: flex; gap: 2px; height: 31px; }
.bar { display: flex; align-items: center; padding: 0 1px 0 4px; border: solid #bfc0c8; border-width: 0 1px 1px 0; box-shadow: inset 1px 1px #f3f5fc; background: linear-gradient(#d3d8ec, #dfe3f4); }
.grip { width: 3px; height: 19px; margin-right: 4px; background: repeating-linear-gradient(#777b86 0 2px, #f8f8ff 2px 4px); }
.t { width: 25px; height: 25px; }
.t svg { width: 18px; height: 18px; }
.t svg.small { width: 16px; height: 16px; }
.t.on { border: 1px solid #5d6168; border-radius: 3px; background: #ccd0dd; box-shadow: inset 0 0 0 1px #aeb3c0; }
.a { width: 11px; height: 24px; }
.a::before { content: ""; border: 3px solid transparent; border-top-color: #000; border-bottom: 0; }
.a.off::before { border-top-color: #a5a8b2; }
.s { width: 1px; height: 16px; margin: 0 4px 0 3px; background: #b9bac3; }
.more { width: 10px; height: 25px; margin-left: 6px; align-items: flex-end; padding-bottom: 3px; background: linear-gradient(#e9e9ec, #9c9ca0); }
.more::before { content: ""; border: 3px solid transparent; border-top-color: #000; border-bottom: 0; }
.fmt { color: #2c3e50; font: 900 18px/24px Roboto, sans-serif; }
.it { font: italic 700 19px/24px "Liberation Serif", serif; }
.un { font-weight: 500; font-size: 16px; text-decoration: underline; }

.combo { position: relative; display: flex; height: 23px; border: 1px solid #a7a8ad; background: #fff; }
.combo select, .combo input { appearance: none; width: 100%; border: 0; padding: 0 20px 0 4px; background: none; }
.combo::after { content: ""; position: absolute; right: 1px; top: 1px; bottom: 1px; width: 16px; border: 1px solid #55575b; pointer-events: none; background: linear-gradient(#000, #000) 4px 8px / 7px 1px no-repeat, linear-gradient(#000, #000) 5px 9px / 5px 1px no-repeat, linear-gradient(#000, #000) 6px 10px / 3px 1px no-repeat, linear-gradient(#000, #000) 7px 11px / 1px 1px no-repeat, linear-gradient(#f8f8f8, #d9d9d9); }
.combo.find { width: 100px; color: #808080; }
.combo.font { width: 154px; margin: 0 8px 0 9px; }
.combo.size { width: 62px; margin-right: 7px; }
.combo.name { width: 126px; }

.work { flex: 1; min-height: 0; display: flex; }
.doc { flex: 1; min-width: 0; display: flex; flex-direction: column; }
.formula { height: 33px; display: flex; align-items: center; padding: 0 4px 0 6px; background: #efefef; border-right: 1px solid #a0a0a0; }
.fbtns { display: flex; padding: 0 9px 0 7px; }
.line { flex: 1; min-width: 0; height: 22px; border: 1px solid #777; border-width: 2px 1px 1px 2px; border-right-color: #ddd; border-bottom-color: #ddd; padding: 0 3px; background: #fff; }
.gridrow { flex: 1; min-height: 0; display: flex; border-top: 1px solid #6f6f6f; }
.sheet { flex: 1; min-width: 0; overflow: hidden; background: #fff; border-left: 1px solid #777; }
table { width: 100%; table-layout: fixed; border-collapse: separate; border-spacing: 0; font-size: 13px; }
.c-row { width: 34px; }
.c-e { width: 124px; }
.c-g { width: 68px; }
.c-h { width: 451px; }
.c-i { width: 82px; }
.c-j { width: 70px; }
th { padding: 0; font-size: 12px; font-weight: 400; border: solid #6d6d6d; border-width: 0 1px 1px 0; background: linear-gradient(90deg, #f7f7f7 45%, #ededed 50%); }
thead tr { height: 18px; }
thead th { background: linear-gradient(#f7f7f7 45%, #ededed 50%); }
thead th.sel { color: #fff; font-weight: 700; background: linear-gradient(#7cbcff 45%, #3397fe 50%); }
tbody th.sel { color: #fff; font-weight: 700; background: linear-gradient(90deg, #7cbcff 45%, #3397fe 50%); }
tbody tr { height: 26px; }
tbody .r1 { height: 82px; }
tbody .r2 { height: 19px; }
tbody .r3 { height: 38px; }
tbody .r6 { height: 75px; }
td { padding: 0 1px; vertical-align: bottom; white-space: nowrap; border: solid #c0c0c0; border-width: 0 1px 1px 0; }
.grey, .blue { font-family: "DejaVu Sans", sans-serif; font-size: 12px; font-weight: 700; }
td b, .navy { font-family: "Open Sans", sans-serif; font-size: 13px; font-weight: 700; }
td b { line-height: 12px; }
.r1 td, .r3 td { vertical-align: middle; padding-top: 1px; }
.grey { color: #808080; }
.pre { white-space: pre; }
.mid { text-align: center; padding-right: 12px; }
.blue { color: #1f497d; position: relative; }
.blue::after { content: ""; position: absolute; right: 0; top: 37px; border: 4px solid transparent; border-left-color: #900; border-right: 0; }
.phones { width: 63px; overflow: hidden; }
.navy { background: #1f497d; color: #fff; text-align: center; }
.ghi { color: #404040; }
.pink { color: #9e2a8e; }
.lpink { color: #cc3fb4; }
.dblue { color: #002060; }
.mblue { color: #1f497d; }
.green { color: #00b050; }
.cursor { position: relative; }
.cursor::before { content: ""; position: absolute; inset: -2px -2px -1px; border: 3px solid #000; }
.cursor::after { content: ""; position: absolute; right: -4px; bottom: -4px; width: 6px; height: 6px; background: #000; }

.vscroll { width: 17px; display: flex; flex-direction: column; align-items: center; background: #ececec; border-top: 3px solid #000; }
.arr { height: 17px; width: 15px; }
.arr svg { width: 8px; height: 5px; }
.arr.end { margin-top: auto; }
.vthumb { flex: 0 1 208px; width: 15px; border: 1px solid #989898; border-radius: 2px; background: linear-gradient(90deg, #f5f5f5, #e2e2e2 45%, #bfc0c4 55%, #dcdcdc); display: flex; flex-direction: column; align-items: center; justify-content: center; gap: 1px; }
.vthumb i { width: 7px; height: 1px; background: #555; }

.tabrow { height: 18px; display: flex; padding-right: 17px; background: #efefef; border-bottom: 1px solid #fff; }
.tabpane { flex: 0 0 61%; width: 61%; display: flex; border-top: 1px solid #777; padding-left: 3px; }
.tabnav { display: flex; gap: 1px; margin-right: 3px; }
.tabnav button { width: 16px; height: 16px; border: 1px solid #858585; border-radius: 3px; background: linear-gradient(#fff, #ddd); }
.tabnav svg { width: 12px; height: 10px; }
.tab { position: relative; width: 49px; height: 16px; border-bottom: 1px solid #777; }
.tab::after { content: ""; position: absolute; right: -1px; top: 0; width: 1px; height: 15px; background: #555; transform: skewX(-20deg); }
.tab.active { width: 52px; background: #fff; font-weight: 700; }
.tab.active::before { content: ""; position: absolute; left: -1px; top: 0; width: 1px; height: 15px; background: #555; transform: skewX(20deg); }
.split { width: 7px; margin-left: auto; border: 1px solid #777; border-top: 0; background: #eee; }
.hscroll { flex: 1; display: flex; background: #ececec; padding-left: 3px; }
.harr { width: 12px; }
.harr svg { width: 5px; height: 8px; }
.htrack { flex: 1; display: flex; padding-left: 15%; }
.hthumb { width: 45%; height: 16px; border: 1px solid #989898; border-radius: 2px; background: linear-gradient(#f5f5f5, #e2e2e2 45%, #c8c9cc 55%, #dcdcdc); display: flex; align-items: center; justify-content: center; gap: 1px; }
.hthumb i { width: 1px; height: 7px; background: #555; }
.hend { width: 3px; background: #000; margin-left: 3px; }

.splitter { width: 8px; border: solid #a0a0a0; border-width: 1px 1px 0 0; border-left: 1px solid #fff; background: #efefef; display: flex; flex-direction: column; align-items: center; justify-content: center; gap: 2px; }
.splitter i { width: 2px; height: 2px; background: #555; }
.splitter b { border: 2px solid transparent; border-left-color: #444; border-right: 0; margin: 2px 0; }
.sidebar { width: 39px; border: solid #9c9c9c; border-width: 1px 1px 0 1px; background: #efefef; display: flex; flex-direction: column; align-items: center; gap: 3px; padding-top: 12px; }
.sm { width: 12px; height: 12px; }
.sm svg { width: 10px; height: 10px; }
.sidebar hr { width: 24px; margin: 10px 0 0; border: 0; border-top: 1px solid #d0d0d0; }
.sb { width: 32px; height: 32px; border-radius: 3px; }
.sb.on { border: 1px solid #ababab; }
.sb svg { width: 24px; height: 24px; }

.status { height: 23px; display: flex; align-items: center; background: #efefef; }
.status > span { height: 16px; border-right: 1px solid #999; flex: none; white-space: nowrap; }
.status .st-page { width: 341px; padding-left: 10px; }
.status .st-style { width: 361px; padding-left: 5px; }
.status .st-ins { width: 54px; }
.status .st-std { width: 47px; text-align: center; }
.status .st-a { width: 16px; }
.status .st-b { width: 29px; }
.status .st-sum { flex: 1; text-align: center; }
.status .st-zoom { width: 153px; display: flex; align-items: center; gap: 4px; padding: 0 8px 0 4px; }
.status .st-pct { width: 44px; padding-left: 3px; border: 0; }
.zb svg { width: 12px; height: 12px; }
.st-zoom input { appearance: none; flex: 1; min-width: 0; height: 12px; background: linear-gradient(#777, #777) 0 6px / 100% 1px no-repeat; }
.st-zoom input::-webkit-slider-thumb { appearance: none; width: 8px; height: 9px; border: 1px solid #234a66; border-radius: 4px; background: #5b8fb0; }

.taskbar { height: 39px; flex: none; display: flex; border-top: 1px solid #2b3440; background: linear-gradient(90deg, #8493ab, #8394ac 60px, #a6bfdd 130px, #a6bfdd calc(100% - 280px), #8092aa calc(100% - 235px), #8092aa); }
.start { width: 54px; }
.start svg { width: 38px; height: 38px; }
.apps { display: flex; gap: 2px; padding-left: 5px; }
.app-btn { width: 60px; }
.app-btn svg { width: 32px; height: 32px; }
.app-btn.run { border: 1px solid #43566f; border-radius: 3px; background: linear-gradient(135deg, #d3dfee, #a9c0dd 60%, #bccfe5); box-shadow: inset 0 0 0 1px #dae6f3; }
.app-btn.cur { background: linear-gradient(135deg, #f2f6fa, #c6d6e8 60%, #dbe6f1); }
.tray { margin-left: auto; display: flex; align-items: center; color: #fff; }
.lang { margin: 0 15px 6px 0; }
.up { width: 9px; margin-right: 12px; }
.up svg { width: 9px; height: 5px; }
.tr { width: 16px; margin-right: 8px; }
.tr svg { width: 16px; height: 16px; }
.clock { width: 70px; display: flex; flex-direction: column; text-align: center; line-height: 17px; }
.desk { width: 15px; height: 38px; border: 1px solid #3a4a5e; background: linear-gradient(90deg, #a0adbf, #5a6a80 30%, #8595aa); }
```
